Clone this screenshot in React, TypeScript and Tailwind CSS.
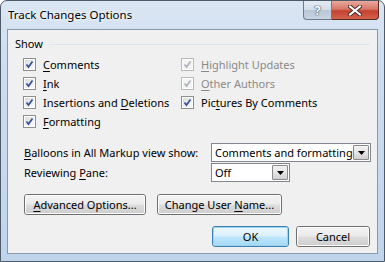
import type { ReactNode } from "react";

const FONT = "font-['Segoe_UI','Noto_Sans','DejaVu_Sans',sans-serif]";

function Check({ checked, disabled }: { checked: boolean; disabled?: boolean }) {
  return (
    <span
      className={`flex h-[13px] w-[13px] shrink-0 items-center justify-center border ${
        disabled ? "border-[#b9b9b9]" : "border-[#8e8f8f]"
      } bg-white`}
    >
      <span
        className={`flex h-[11px] w-[11px] items-center justify-center border border-white ${
          disabled ? "bg-[#f4f4f4]" : "bg-linear-to-br from-[#d9dcdf] to-[#fbfbfb]"
        }`}
      >
        {checked && (
          <svg width="9" height="9" viewBox="0 0 9 9">
            <polyline
              points="1.5,4.5 3.5,7 7.5,1.5"
              fill="none"
              stroke={disabled ? "#aeb4bd" : "#34509a"}
              strokeWidth="1.7"
            />
          </svg>
        )}
      </span>
    </span>
  );
}

function Row({
  children,
  checked = true,
  disabled,
}: {
  children: ReactNode;
  checked?: boolean;
  disabled?: boolean;
}) {
  return (
    <div className="flex h-[19px] items-center gap-[7px] whitespace-nowrap">
      <Check checked={checked} disabled={disabled} />
      <span className={disabled ? "text-[#8a8a8a]" : "text-black"}>{children}</span>
    </div>
  );
}

function Select({ value, width }: { value: string; width: string }) {
  return (
    <div
      className={`flex h-[19px] ${width} items-center justify-between whitespace-nowrap border border-[#828790] bg-white pl-[3px] pr-px`}
    >
      <span className="text-black">{value}</span>
      <span className="flex h-[15px] w-[16px] items-center justify-center rounded-[1px] border border-[#8b8b8b] bg-linear-to-b from-[#f3f3f3] via-[#e6e6e6] to-[#cfcfcf]">
        <svg width="7" height="4" viewBox="0 0 7 4">
          <polygon points="0,0 7,0 3.5,4" fill="#000" />
        </svg>
      </span>
    </div>
  );
}

function Button({
  children,
  width,
  primary,
}: {
  children: ReactNode;
  width: string;
  primary?: boolean;
}) {
  return (
    <div
      className={`flex h-[21px] ${width} items-center justify-center whitespace-nowrap rounded-[3px] border ${
        primary ? "border-[#3c7fb1]" : "border-[#707070]"
      }`}
    >
      <div
        className={`flex h-full w-full items-center justify-center rounded-[2px] border ${
          primary
            ? "border-[#9fd4f1] bg-[linear-gradient(#eaf6fd_0%,#d9f0fc_48%,#bee6fd_52%,#a7d9f5_100%)]"
            : "border-[#fcfcfc] bg-[linear-gradient(#f2f2f2_0%,#ebebeb_48%,#dddddd_52%,#cfcfcf_100%)]"
        } text-black`}
      >
        {children}
      </div>
    </div>
  );
}

export default function App() {
  return (
    <div className={`${FONT} text-[11px] leading-[16px]`}>
      <div className="flex h-[262px] w-[385px] flex-col rounded-t-[7px] border border-[#4d5a69] bg-[linear-gradient(#dbe6f3_0%,#cfdef0_20%,#bfd4eb_100%)]">
        {/* title bar */}
        <div className="flex h-[28px] items-start justify-between">
          <span className="ml-[7px] mt-[6px] text-[11.5px] text-black [text-shadow:0_0_6px_#ffffff,0_0_3px_#ffffff]">
            Track Changes Options
          </span>
          <div className="mr-[5px] flex">
            <div className="flex h-[19px] w-[29px] items-center justify-center rounded-bl-[4px] border border-t-0 border-[#6b7b8d] bg-[linear-gradient(#e4ebf3_0%,#d3dde9_48%,#b9c6d5_52%,#c9d4e1_100%)]">
              <span className="text-[13px] font-bold leading-none text-white [text-shadow:0_0_1px_#3a4a5c,0_0_1px_#3a4a5c,0_0_1px_#3a4a5c]">
                ?
              </span>
            </div>
            <div className="flex h-[19px] w-[47px] items-center justify-center rounded-br-[4px] border border-l-0 border-t-0 border-[#5a2a22] bg-[linear-gradient(#e9a99c_0%,#d6786a_45%,#c4412e_55%,#d2634f_100%)]">
              <svg width="14" height="11" viewBox="0 0 14 11">
                <path d="M2 1.5 L12 9.5 M12 1.5 L2 9.5" stroke="#4a2a25" strokeWidth="4" strokeLinecap="square" />
                <path d="M2 1.5 L12 9.5 M12 1.5 L2 9.5" stroke="#ffffff" strokeWidth="2" strokeLinecap="square" />
              </svg>
            </div>
          </div>
        </div>

        {/* client area */}
        <div className="mx-[6px] flex h-[225px] flex-col border border-[#8799ad] bg-[#f0f0f0]">
          <div className="ml-[7px] mr-[7px] mt-[6px] flex h-[16px] items-center">
            <span className="text-black">Show</span>
            <span className="ml-[6px] h-px flex-1 bg-[#dde4ec]" />
          </div>

          <div className="ml-[15px] mt-[3px] flex">
            <div className="flex w-[158px] flex-col">
              <Row>
                <span className="underline underline-offset-2">C</span>omments
              </Row>
              <Row>
                <span className="underline underline-offset-2">I</span>nk
              </Row>
              <Row>
                Insertions and <span className="underline underline-offset-2">D</span>eletions
              </Row>
              <Row>
                <span className="underline underline-offset-2">F</span>ormatting
              </Row>
            </div>
            <div className="flex flex-col">
              <Row disabled>
                <span className="underline underline-offset-2">H</span>ighlight Updates
              </Row>
              <Row disabled>
                <span className="underline underline-offset-2">O</span>ther Authors
              </Row>
              <Row>
                Pic<span className="underline underline-offset-2">t</span>ures By Comments
              </Row>
            </div>
          </div>

          <div className="ml-[16px] mt-[12px] flex flex-col gap-px">
            <div className="flex items-center">
              <span className="w-[187px] whitespace-nowrap">
                <span className="underline underline-offset-2">B</span>alloons in All Markup view show:
              </span>
              <Select value="Comments and formatting" width="w-[160px]" />
            </div>
            <div className="flex items-center">
              <span className="w-[187px] whitespace-nowrap">
                Reviewing <span className="underline underline-offset-2">P</span>ane:
              </span>
              <Select value="Off" width="w-[79px]" />
            </div>
          </div>

          <div className="ml-[16px] mt-[12px] flex gap-[11px]">
            <Button width="w-[122px]">
              <span>
                <span className="underline underline-offset-2">A</span>dvanced Options...
              </span>
            </Button>
            <Button width="w-[125px]">
              <span>
                Change User <span className="underline underline-offset-2">N</span>ame...
              </span>
            </Button>
          </div>

          <div className="mr-[7px] mt-[11px] flex justify-end gap-[7px]">
            <Button width="w-[77px]" primary>
              OK
            </Button>
            <Button width="w-[74px]">Cancel</Button>
          </div>
        </div>
      </div>
    </div>
  );
}
